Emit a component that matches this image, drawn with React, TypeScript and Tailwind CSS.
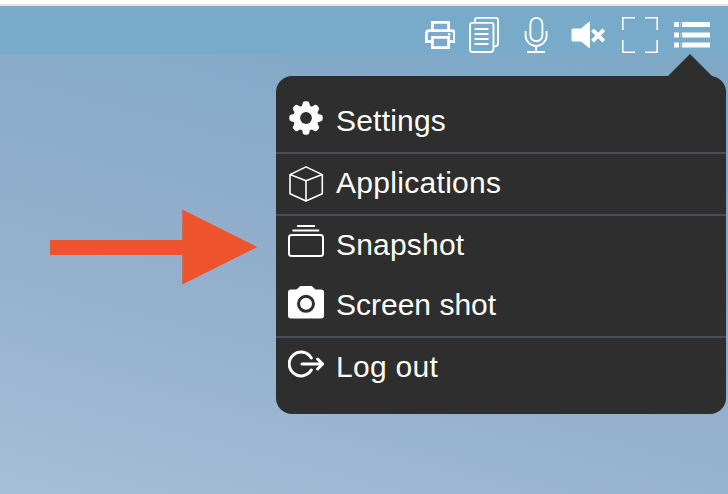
import type { ReactNode } from "react";

const GEAR_TEETH = [0, 45, 90, 135, 180, 225, 270, 315];

function PrinterIcon() {
  return (
    <svg className="ml-[425px] h-[30px] w-[30px] shrink-0" viewBox="425 20 30 30" fill="none" stroke="#fff" strokeWidth="2.8">
      <path d="M432.4 30.5v-8.1h16.2v8.1M431 41.6h-4.6v-8q0-3 3-3h22.2q3 0 3 3v8H449" />
      <path d="M432.4 37.4h16.2v10.2h-16.2z" />
      <circle cx="449.2" cy="34.3" r="1.3" fill="#fff" stroke="none" />
    </svg>
  );
}

function DocumentsIcon() {
  return (
    <svg className="ml-[14px] h-9 w-[30px] shrink-0" viewBox="469 17 30 36" fill="none" stroke="#fff" strokeWidth="1.9">
      <path d="M474.9 22v-2q0-2.1 2.1-2.1h18.9q2.1 0 2.1 2.1v23q0 3.4-3 3.4h-1.5" />
      <path d="M472.2 22.9h19.2q2.1 0 2.1 2.1v23.5q0 3.5-3 3.5h-18.3q-2.1 0-2.1-2.1V25q0-2.1 2.1-2.1z" />
      <path d="M474.5 29h14M474.5 34h14M474.5 39h14M474.5 44h14" />
    </svg>
  );
}

function MicIcon() {
  return (
    <svg className="ml-[25px] h-9 w-6 shrink-0" viewBox="524 17 24 36" fill="none" stroke="#fff" strokeWidth="1.9">
      <rect x="530.4" y="17.9" width="12" height="23.4" rx="6" />
      <path d="M525.6 31v4.5a10.5 10.5 0 0 0 21 0V31M536.1 46v6M527 52h18" />
    </svg>
  );
}

function MutedIcon() {
  return (
    <svg className="ml-[23px] h-[30px] w-[35px] shrink-0" viewBox="571 20 35 30" fill="#fff">
      <path d="M573 28.5h8l6.5-5.5q1.2-1 2.4-1.5v26.7q-1.2-.4-2.4-1.5l-6.5-5.2h-8q-1.5 0-1.5-1.5V30q0-1.5 1.5-1.5z" />
      <path d="m592.5 29.8 11.3 11.3m0-11.3-11.3 11.3" stroke="#fff" strokeWidth="4" />
    </svg>
  );
}

function FullscreenIcon() {
  return (
    <svg className="ml-4 h-9 w-9 shrink-0" viewBox="622 17 36 36" fill="none" stroke="#fff" strokeWidth="1.6">
      <path d="M635 17.8h-12.2V30M645 17.8h12.2V30M622.8 40v12.2H635M657.2 40v12.2H645" />
    </svg>
  );
}

function ListIcon() {
  return (
    <svg className="ml-4 h-[26px] w-9 shrink-0" viewBox="674 22 36 26" fill="#fff">
      <path d="M674 22h5v5h-5zM682 22h28v5h-28zM674 32.4h5v5h-5zM682 32.4h28v5h-28zM674 42.6h5v5h-5zM682 42.6h28v5h-28z" />
      <path d="M680 22h1v5h-1zM680 32.4h1v5h-1zM680 42.6h1v5h-1z" opacity=".35" />
    </svg>
  );
}

function GearIcon() {
  return (
    <svg className="h-9 w-9" viewBox="288 100 36 36">
      <g fill="#fff">
        <circle cx="306" cy="118" r="12.8" />
        {GEAR_TEETH.map((angle) => (
          <path
            key={angle}
            d="M300.4 108.5q1.8-1.6 2.2-4.9.4-2.3 2.4-2.3h2q2 0 2.4 2.3.4 3.3 2.2 4.9z"
            transform={`rotate(${angle} 306 118)`}
          />
        ))}
      </g>
      <circle cx="306" cy="118" r="5.9" fill="#2e2e2e" />
    </svg>
  );
}

function CubeIcon() {
  return (
    <svg className="h-9 w-9" viewBox="288 166 36 36" fill="none" stroke="#fff" strokeWidth="1.6" strokeLinejoin="round">
      <path d="M306 166.9l16.3 7.7v19.2L306 201.1l-16-7.3v-19.2zM290 174.6l16 6.1 16.3-6.1M306 180.7v20.4" />
    </svg>
  );
}

function StackIcon() {
  return (
    <svg className="h-9 w-9" viewBox="288 224 36 36" fill="none" stroke="#fff" strokeWidth="2">
      <rect x="289" y="235" width="34" height="21" rx="2.5" />
      <path d="M292.5 230.4h26.7M297 226.1h18" />
    </svg>
  );
}

function CameraIcon() {
  return (
    <svg className="h-9 w-9" viewBox="288 284 36 36">
      <path
        fill="#fff"
        d="M291 289.5h5q1 0 1.6-.9l1.6-1.7q.7-1 2-1h9.6q1.3 0 2 1l1.6 1.7q.6.9 1.6.9h5q3 0 3 3v23q0 3-3 3h-30q-3 0-3-3v-23q0-3 3-3z"
      />
      <circle cx="306" cy="303.8" r="7.5" fill="none" stroke="#2e2e2e" strokeWidth="3" />
    </svg>
  );
}

function LogoutIcon() {
  return (
    <svg className="h-9 w-9" viewBox="288 346 36 36" fill="none" stroke="#fff" strokeWidth="3" strokeLinecap="round" strokeLinejoin="round">
      <path d="M311.3 357.9a11.9 11.9 0 1 0 0 12.2M302 364h20M317.6 359l5 5-5 5" />
    </svg>
  );
}

function MenuItem({ icon, label, className, labelClass }: { icon: ReactNode; label: string; className: string; labelClass: string }) {
  return (
    <button className={`flex w-full items-start pl-3 text-left ${className}`}>
      <span className="h-9 w-9 shrink-0">{icon}</span>
      <span className={`ml-3 whitespace-nowrap text-[30px] leading-9 ${labelClass}`}>{label}</span>
    </button>
  );
}

function Menu() {
  return (
    <nav className="absolute left-[276px] top-[76px] h-[338px] w-[450px] rounded-2xl bg-[#2e2e2e] text-white">
      <svg className="absolute left-[391px] top-[-22px] h-[23px] w-[46px]" viewBox="0 0 46 23">
        <path d="M23 0 45 22v1H1v-1z" fill="#2e2e2e" />
      </svg>
      <MenuItem icon={<GearIcon />} label="Settings" className="h-[78px] border-b-2 border-[#494d57] pt-6" labelClass="mt-[3px] tracking-[0.2px]" />
      <MenuItem icon={<CubeIcon />} label="Applications" className="h-[62px] border-b-2 border-[#494d57] pt-3" labelClass="-mt-px tracking-[0.3px]" />
      <MenuItem icon={<StackIcon />} label="Snapshot" className="h-[60px] pt-2" labelClass="mt-[3px] tracking-[0.2px]" />
      <MenuItem icon={<CameraIcon />} label="Screen shot" className="h-[62px] border-b-2 border-[#494d57] pt-2" labelClass="mt-[3px]" />
      <MenuItem icon={<LogoutIcon />} label="Log out" className="h-[76px] pt-2" labelClass="mt-[3px] tracking-[0.3px]" />
    </nav>
  );
}

export default function App() {
  return (
    <div className="relative flex h-[494px] w-[728px] flex-col overflow-hidden bg-[linear-gradient(195deg,#7ca7c6_0%,#82a9c8_20%,#95b0cc_65%,#a6bfd8_100%)] font-['Liberation_Sans',Arial,sans-serif]">
      <div className="h-1.5 shrink-0 border-b-2 border-[#dfe3e2] bg-white" />
      <header className="flex h-12 shrink-0 items-center bg-[#77abc9] pt-[10px]">
        <PrinterIcon />
        <DocumentsIcon />
        <MicIcon />
        <MutedIcon />
        <FullscreenIcon />
        <ListIcon />
      </header>
      <main className="flex-1 pl-[50px] pt-[155px]">
        <svg className="h-[76px] w-[208px]" viewBox="50 209 208 76" fill="#ed542e">
          <path d="M50 240h132.3v-30.5L257.5 247l-75.2 37.5V255H50z" />
        </svg>
      </main>
      <Menu />
    </div>
  );
}
